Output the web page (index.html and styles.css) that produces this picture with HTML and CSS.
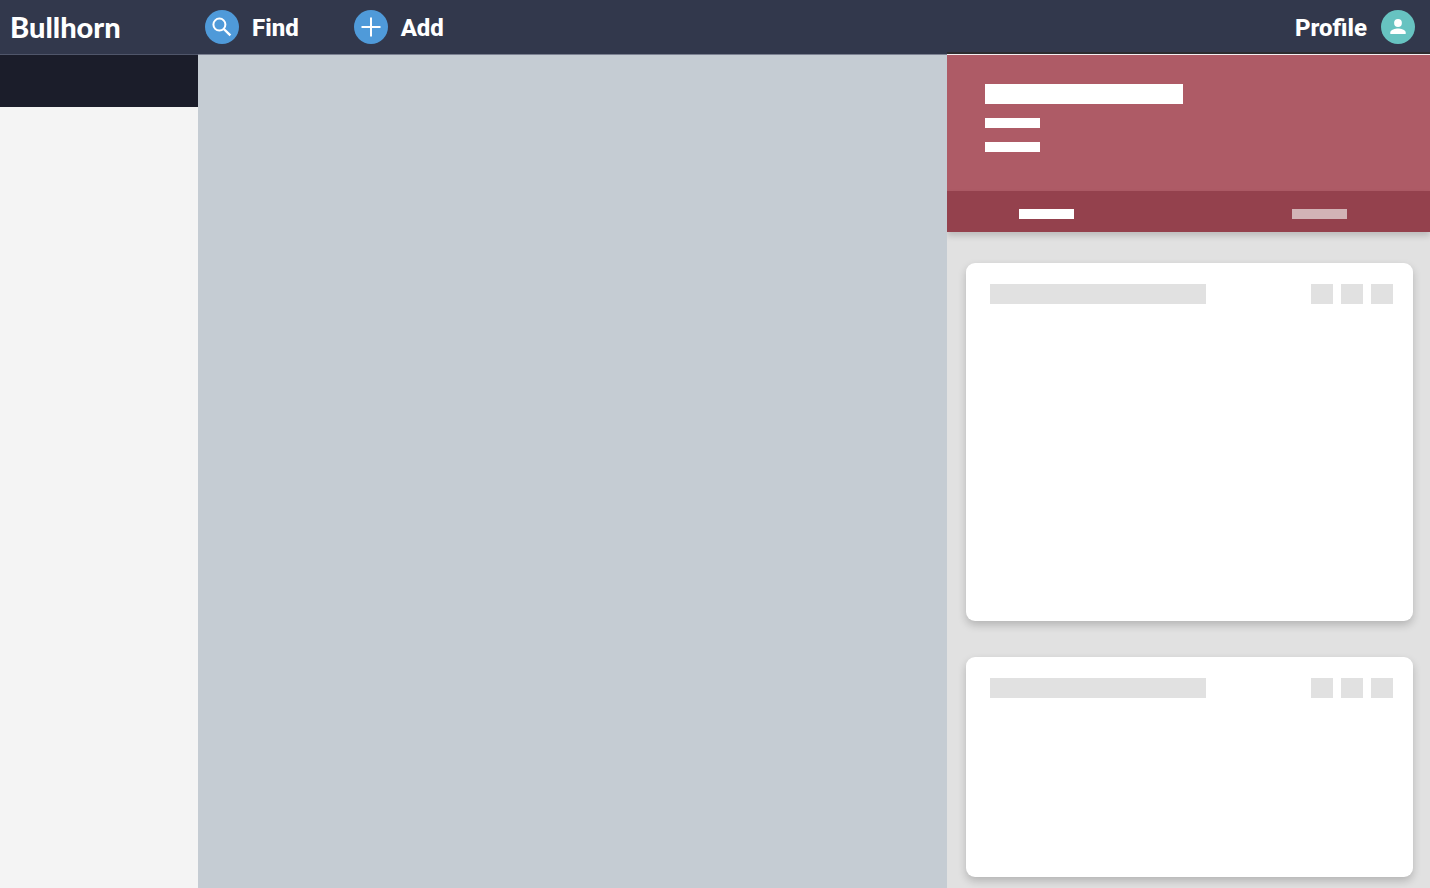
FILE: index.html
```html
<!DOCTYPE html>
<html lang="en">
<head>
<meta charset="utf-8">
<meta name="viewport" content="width=device-width, initial-scale=1">
<title>Bullhorn</title>
<link rel="stylesheet" href="styles.css">
</head>
<body>
<div class="app">
  <header class="topbar">
    <a class="brand" href="#">Bullhorn</a>
    <nav class="actions">
      <button class="action" type="button">
        <svg class="badge badge-blue" viewBox="0 0 34 34" aria-hidden="true">
          <circle class="disc" cx="17" cy="17" r="17"/>
          <circle class="line" cx="14.4" cy="14.6" r="6"/>
          <path class="line thick" d="M18.8 19l6.600 6.400"/>
        </svg>
        <span class="label">Find</span>
      </button>
      <button class="action" type="button">
        <svg class="badge badge-blue" viewBox="0 0 34 34" aria-hidden="true">
          <circle class="disc" cx="17" cy="17" r="17"/>
          <path class="line" d="M17 7.500v19M7.500 17h19"/>
        </svg>
        <span class="label">Add</span>
      </button>
    </nav>
    <button class="action profile" type="button">
      <span class="label">Profile</span>
      <svg class="badge badge-teal" viewBox="0 0 34 34" aria-hidden="true">
        <circle class="disc" cx="17" cy="17" r="17"/>
        <circle class="solid" cx="17" cy="13" r="3.9"/>
        <path class="solid" d="M9.3 24v-1.500c0-2.700 5.100-4 7.700-4s7.700 1.300 7.700 4v1.500z"/>
      </svg>
    </button>
  </header>
  <div class="columns">
    <aside class="sidebar"><div class="sidebar-head"></div></aside>
    <main class="content"></main>
    <section class="panel">
      <div class="summary">
        <div class="block title"></div>
        <div class="block line-item"></div>
        <div class="block line-item"></div>
      </div>
      <div class="tabs">
        <button class="tab" type="button" aria-label="First tab"></button>
        <button class="tab inactive" type="button" aria-label="Second tab"></button>
      </div>
      <div class="cards">
        <article class="card card-tall">
          <div class="card-title"></div>
          <div class="tools">
            <button class="tool" type="button" aria-label="Tool 1"></button>
            <button class="tool" type="button" aria-label="Tool 2"></button>
            <button class="tool" type="button" aria-label="Tool 3"></button>
          </div>
        </article>
        <article class="card">
          <div class="card-title"></div>
          <div class="tools">
            <button class="tool" type="button" aria-label="Tool 1"></button>
            <button class="tool" type="button" aria-label="Tool 2"></button>
            <button class="tool" type="button" aria-label="Tool 3"></button>
          </div>
        </article>
      </div>
    </section>
  </div>
</div>
</body>
</html>
```
FILE: styles.css
```css
* { box-sizing: border-box; }
body { margin: 0; font-family: Roboto, "Liberation Sans", sans-serif; }
button { border: 0; padding: 0; background: none; font: inherit; color: inherit; cursor: pointer; }

.app { display: flex; flex-direction: column; min-height: 100vh; }

.topbar {
  display: flex;
  align-items: center;
  height: 54px;
  padding: 0 15px 0 10px;
  background: #32384c;
  color: #fff;
}
.brand {
  width: 195px;
  color: #fff;
  font-family: Lato, sans-serif;
  font-size: 29px;
  font-weight: 900;
  line-height: 34px;
  text-decoration: none;
}
.actions { display: flex; gap: 55px; }
.action {
  display: flex;
  align-items: center;
  gap: 13px;
  font-size: 24px;
  font-weight: 800;
  line-height: 32px;
}
.label { padding-top: 2px; }
.profile { gap: 14px; margin-left: auto; }
.badge { width: 34px; height: 34px; }
.badge-blue .disc { fill: #4f9ad9; }
.badge-teal .disc { fill: #67c3c1; }
.line { fill: none; stroke: #fff; stroke-width: 2; }
.thick { stroke-width: 2.4; }
.solid { fill: #fff; }

.columns { display: flex; flex: 1; }
.sidebar { width: 198px; background: #f4f4f4; border-top: 1px solid #50566a; }
.sidebar-head { height: 52px; background: #1b1d2a; }
.content { flex: 1; background: #c5ccd3; border-top: 1px solid #7c8192; }
.panel {
  width: 483px;
  overflow: hidden;
  background: #e1e1e1;
  border-top: 1px solid #f5eef0;
  box-shadow: 0 -2px 0 #2d2d2f;
}

.summary {
  display: flex;
  flex-direction: column;
  gap: 14px;
  height: 136px;
  padding: 29px 38px;
  background: #ae5b66;
}
.block { background: #fff; }
.title { width: 198px; height: 20px; }
.line-item { width: 55px; height: 10px; }
.tabs {
  display: flex;
  align-items: center;
  justify-content: space-between;
  height: 41px;
  padding: 4px 83px 0 72px;
  background: #94414d;
  box-shadow: 0 4px 6px rgba(0, 0, 0, 0.16);
}
.tab { width: 55px; height: 10px; background: #fff; }
.inactive { background: #d2b3b6; }

.cards { display: flex; flex-direction: column; gap: 36px; padding: 31px 17px 11px 19px; }
.card {
  display: flex;
  align-items: flex-start;
  justify-content: space-between;
  min-height: 220px;
  padding: 21px 20px 21px 24px;
  border-radius: 9px;
  background: #fff;
  box-shadow: 0 4px 8px rgba(0, 0, 0, 0.2);
}
.card-tall { min-height: 358px; }
.card-title { width: 216px; height: 20px; background: #e1e1e1; }
.tools { display: flex; gap: 8px; }
.tool { width: 22px; height: 20px; background: #e1e1e1; }
```
